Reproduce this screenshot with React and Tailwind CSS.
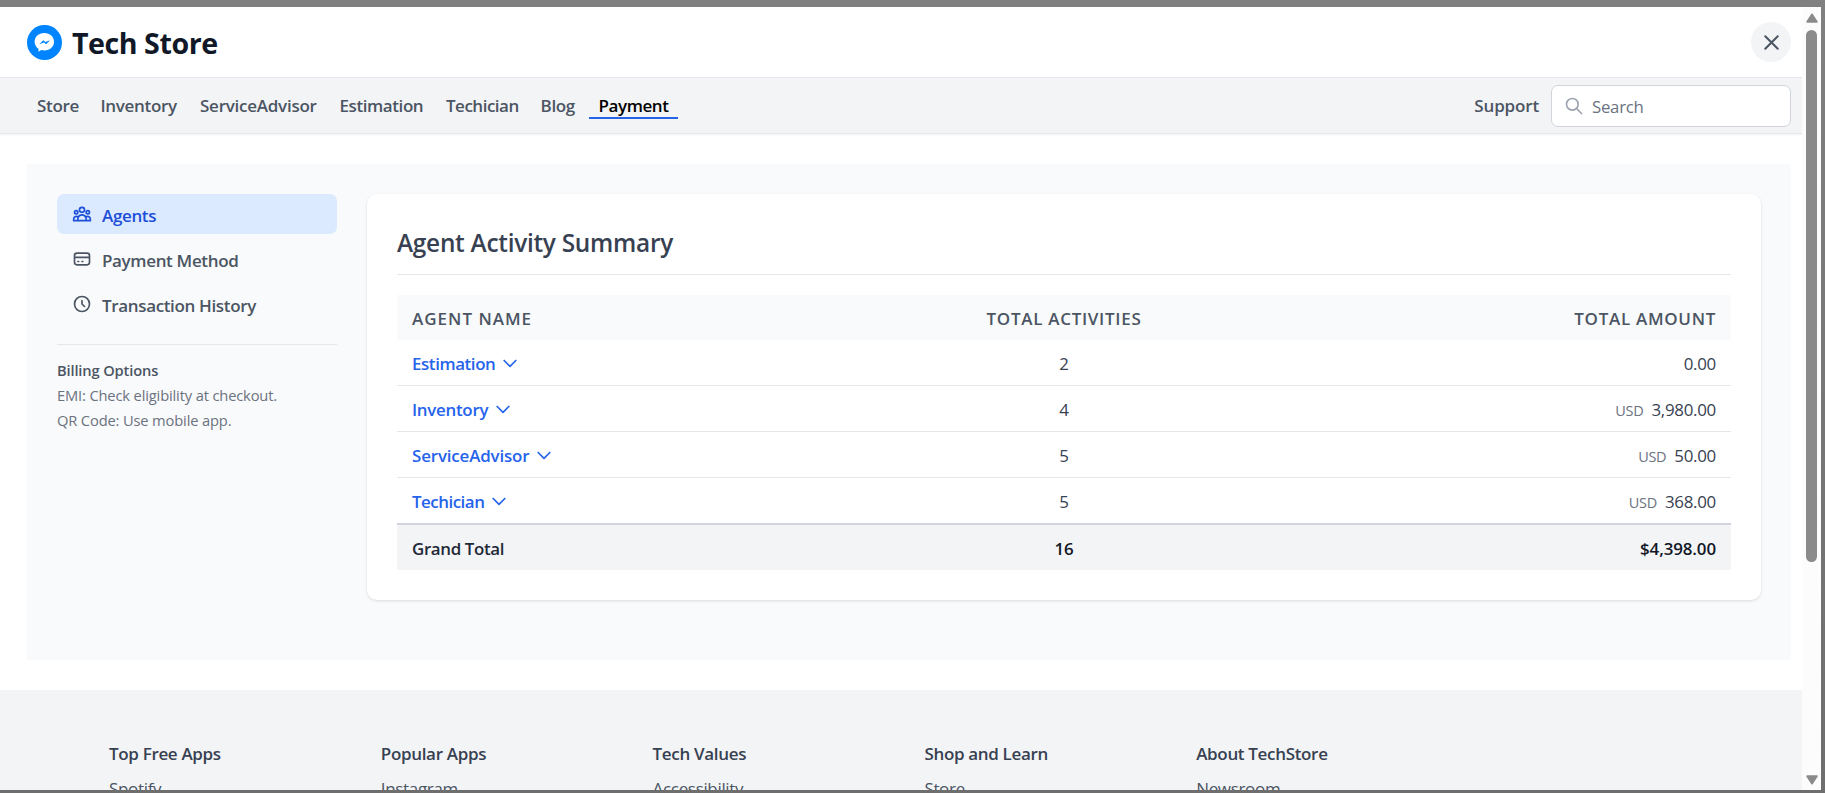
import {
  HiOutlineUserGroup,
  HiOutlineCreditCard,
  HiOutlineClock,
  HiOutlineSearch,
  HiOutlineX,
  HiOutlineChevronDown,
} from "react-icons/hi";

const navItems = [
  { label: "Store", box: "w-[61px]" },
  { label: "Inventory", box: "w-[97px]" },
  { label: "ServiceAdvisor", box: "w-[137px] tracking-[-0.25px]" },
  { label: "Estimation", box: "w-[104px] tracking-[-0.42px]" },
  { label: "Techician", box: "w-[92px] tracking-[-0.5px]" },
  { label: "Blog", box: "w-[55.5px]" },
  { label: "Payment", box: "w-[89px] tracking-[-0.42px]", active: true },
];

const sideItems = [
  { label: "Agents", Icon: HiOutlineUserGroup, active: true },
  { label: "Payment Method", Icon: HiOutlineCreditCard },
  { label: "Transaction History", Icon: HiOutlineClock },
];

const agents = [
  { name: "Estimation", tracking: "tracking-[-0.4px]", count: 2, amount: "0.00" },
  { name: "Inventory", tracking: "tracking-[-0.28px]", count: 4, currency: "USD", amount: "3,980.00" },
  { name: "ServiceAdvisor", tracking: "tracking-[-0.14px]", count: 5, currency: "USD", amount: "50.00" },
  { name: "Techician", tracking: "tracking-[-0.48px]", count: 5, currency: "USD", amount: "368.00" },
];

const footerColumns = [
  { title: "Top Free Apps", link: "Spotify" },
  { title: "Popular Apps", link: "Instagram" },
  { title: "Tech Values", link: "Accessibility" },
  { title: "Shop and Learn", link: "Store" },
  { title: "About TechStore", link: "Newsroom" },
];

function Logo() {
  return (
    <svg className="size-[35px]" viewBox="0 0 35 35">
      <circle cx="17.5" cy="17.5" r="17.5" fill="#0084ff" />
      <path
        fill="#fff"
        d="M17.3 8C23 8 27 11.9 27 16.7s-4 8.7-9.7 8.7c-1 0-2.1-.2-3-.4l-2.8 1.8v-3.1c-2.4-1.6-3.9-4.1-3.9-7C7.6 11.9 11.6 8 17.3 8z"
      />
      <path fill="#0084ff" d="M12.3 19.3l3.9-4.1 2.2 1.9 4.7-1.9-3.9 4.1-2.2-1.9z" />
    </svg>
  );
}

function Header() {
  return (
    <header className="flex h-[71px] shrink-0 items-center justify-between border-b border-[#e5e7eb] pr-[11px] pl-[27px]">
      <div className="flex h-[35px] items-center gap-2.5">
        <Logo />
        <h1 className="pt-px text-[28.6px] leading-[35px] font-bold tracking-[-0.45px] text-[#111827]">Tech Store</h1>
      </div>
      <button className="flex size-10 items-center justify-center rounded-full bg-[#f3f4f6] text-[#4b5563]">
        <HiOutlineX className="size-[25px]" />
      </button>
    </header>
  );
}

function Nav() {
  return (
    <nav className="flex h-14 shrink-0 items-center justify-between border-b border-[#e5e7eb] bg-[#f3f4f6] pr-[11px] pl-[27px] shadow-[0_1px_2px_rgba(0,0,0,0.05)]">
      <div className="flex gap-[2.5px] font-semibold tracking-[-0.33px] text-[#4b5563]">
        {navItems.map(({ label, box, active }) => (
          <a
            key={label}
            className={`flex h-[27px] items-center border-b-2 px-2.5 pt-[3px] text-[17px] leading-[22px] whitespace-nowrap ${box} ${
              active ? "border-[#2563eb] text-black" : "border-transparent"
            }`}
          >
            {label}
          </a>
        ))}
      </div>
      <div className="flex items-center gap-3">
        <a className="pt-px text-[17px] font-semibold tracking-[-0.15px] text-[#4b5563]">Support</a>
        <div className="flex h-[42px] w-[240px] items-center gap-2 rounded-[7px] border border-[#d1d5db] bg-white pl-3">
          <HiOutlineSearch className="size-5 text-[#9ca3af]" />
          <span className="pt-0.5 text-[16.8px] tracking-[-0.25px] text-[#6b7280]">Search</span>
        </div>
      </div>
    </nav>
  );
}

function Sidebar() {
  return (
    <aside className="w-[280px] shrink-0">
      <ul className="flex flex-col gap-[5px]">
        {sideItems.map(({ label, Icon, active }) => (
          <li
            key={label}
            className={`flex h-10 items-center gap-2.5 rounded-[7px] px-[15px] ${
              active ? "bg-[#dbeafe] text-[#1d4ed8]" : "text-[#4b5563]"
            }`}
          >
            <Icon className="size-5" />
            <span className="pt-[3px] text-[17px] leading-[25px] font-semibold tracking-[-0.35px]">{label}</span>
          </li>
        ))}
      </ul>
      <div className="mt-5 border-t border-[#e5e7eb] pt-[13px] text-[14.7px] leading-[25px] tracking-[-0.15px] text-[#6b7280]">
        <p className="font-semibold text-[#4b5563]">Billing Options</p>
        <p>EMI: Check eligibility at checkout.</p>
        <p>QR Code: Use mobile app.</p>
      </div>
    </aside>
  );
}

function SummaryCard() {
  return (
    <section className="h-[406px] flex-1 rounded-[10px] bg-white px-[30px] pt-[30px] shadow-[0_1px_3px_rgba(0,0,0,0.12)]">
      <h2 className="h-[51px] border-b border-[#e5e7eb] pt-px text-[24.4px] leading-[35px] font-semibold tracking-[-0.27px] text-[#374151]">
        Agent Activity Summary
      </h2>
      <table className="mt-5 w-full table-fixed border-separate border-spacing-0 text-[16.9px] leading-[25px] tracking-[-0.28px] text-[#374151]">
        <thead>
          <tr className="h-[45px] bg-[#f9fafb] text-[17px] tracking-[0.7px] text-[#4b5563]">
            <th className="px-[15px] pt-px pb-0 text-left font-semibold tracking-[1px]">AGENT NAME</th>
            <th className="px-[15px] pt-px pb-0 text-center font-semibold">TOTAL ACTIVITIES</th>
            <th className="px-[15px] pt-px pb-0 text-right font-semibold">TOTAL AMOUNT</th>
          </tr>
        </thead>
        <tbody>
          {agents.map(({ name, tracking, count, currency, amount }, i) => {
            const border = i < agents.length - 1 ? "h-[46px] border-b border-[#e5e7eb]" : "h-[45px]";
            return (
              <tr key={name}>
                <td className={`px-[15px] py-0 ${border}`}>
                  <div className="flex items-center gap-[5px] font-semibold text-[#2563eb]">
                    <span className={`pt-0.5 ${tracking}`}>{name}</span>
                    <HiOutlineChevronDown className="size-5" />
                  </div>
                </td>
                <td className={`px-[15px] pt-0.5 pb-0 text-center ${border}`}>{count}</td>
                <td className={`px-[15px] pt-0.5 pb-0 text-right ${border}`}>
                  {currency && <span className="mr-2 text-[14.5px] text-[#6b7280]">{currency}</span>}
                  {amount}
                </td>
              </tr>
            );
          })}
        </tbody>
        <tfoot>
          <tr className="bg-[#f3f4f6] font-semibold text-[#111827]">
            <td className="h-[47px] border-t-2 border-[#d1d5db] px-[15px] pt-0.5 tracking-[-0.36px] text-[#1f2937]">Grand Total</td>
            <td className="h-[47px] border-t-2 border-[#d1d5db] px-[15px] pt-0.5 text-center">16</td>
            <td className="h-[47px] border-t-2 border-[#d1d5db] px-[15px] pt-0.5 text-right tracking-[-0.1px]">$4,398.00</td>
          </tr>
        </tfoot>
      </table>
    </section>
  );
}

function Footer() {
  return (
    <footer className="flex h-[100px] shrink-0 overflow-hidden bg-[#f3f4f6] pt-[51px] pl-[109px] text-[17px] leading-[25px] tracking-[-0.33px] text-[#374151]">
      {footerColumns.map(({ title, link }) => (
        <div key={title} className="w-[271.8px] shrink-0">
          <h3 className="font-semibold">{title}</h3>
          <p className="mt-2.5 text-[#4b5563]">{link}</p>
        </div>
      ))}
    </footer>
  );
}

function Scrollbar() {
  return (
    <div className="flex w-[19px] shrink-0 flex-col items-center bg-[#fcfcfc] pt-1.5 pb-[5px]">
      <svg className="h-[10px] w-[12px]" viewBox="0 0 12 10">
        <path d="M6 1.5L10.7 8.8H1.3z" fill="#8a8a8a" stroke="#8a8a8a" strokeWidth="2" strokeLinejoin="round" />
      </svg>
      <div className="mt-[7px] h-[532px] w-[11px] rounded-full bg-[#8a8a8a]" />
      <svg className="mt-auto h-[10px] w-[12px]" viewBox="0 0 12 10">
        <path d="M6 8.5L10.7 1.2H1.3z" fill="#8a8a8a" stroke="#8a8a8a" strokeWidth="2" strokeLinejoin="round" />
      </svg>
    </div>
  );
}

export default function App() {
  return (
    <div className="h-[793px] w-[1825px] overflow-hidden bg-linear-to-b from-[#808080] to-[#6e6e6e] pt-[7px] pr-1 pb-[3px] font-['Open_Sans',sans-serif]">
      <div className="flex h-[783px] bg-white">
        <div className="flex min-w-0 flex-1 flex-col">
          <Header />
          <Nav />
          <main className="mt-[30px] mr-[11px] mb-[30px] ml-[27px] flex h-[496px] shrink-0 gap-[30px] bg-[#f9fafb] p-[30px]">
            <Sidebar />
            <SummaryCard />
          </main>
          <Footer />
        </div>
        <Scrollbar />
      </div>
    </div>
  );
}
